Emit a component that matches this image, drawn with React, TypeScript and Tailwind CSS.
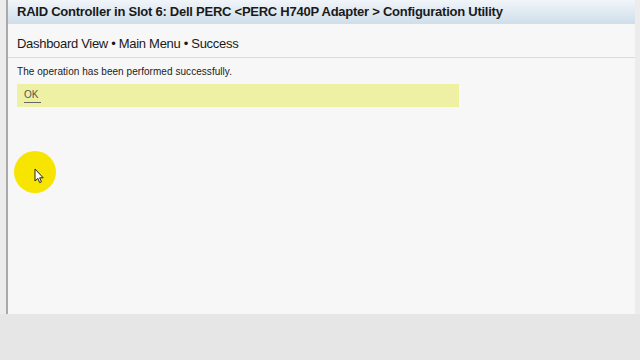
import React from "react";

export default function App() {
  return (
    <div className="w-[640px] h-[360px] bg-[#e6e6e6] relative overflow-hidden" style={{ fontFamily: '"Liberation Sans", Arial, sans-serif' }}>
      <div className="flex h-[314px]">
        <div className="w-[6px] bg-[#ececec]" />
        <div className="w-[2px] bg-[#a9a9a9]" />
        <div className="w-[627px] flex flex-col bg-[#f7f7f7]">
          <div className="h-[24px] bg-gradient-to-b from-[#f1f5f9] to-[#cfdeea] flex items-center pl-[9px]">
            <span className="text-[13px] font-bold text-[#1a1a1a] tracking-[-0.25px]">RAID Controller in Slot 6: Dell PERC &lt;PERC H740P Adapter &gt; Configuration Utility</span>
          </div>
          <div className="h-[34px] flex items-center pl-[9px] border-b border-[#dcdcdc] pt-[6px]">
            <span className="text-[13px] text-[#1a1a1a] tracking-[-0.3px]">Dashboard View • Main Menu • Success</span>
          </div>
          <div className="pl-[9px] pt-[7px]">
            <div className="text-[10px] text-[#222] leading-[13px] tracking-[0.05px]">The operation has been performed successfully.</div>
            <div className="mt-[6px] w-[442px] h-[23px] bg-[#eef0a4] flex items-center pl-[7px]">
              <span className="text-[10px] text-[#555] border-b border-[#666] leading-[12px] pb-[1px] pr-[3px]">OK</span>
            </div>
          </div>
        </div>
        <div className="w-[5px] bg-[#ececec]" />
      </div>
      <div className="absolute left-[14px] top-[151px] w-[42px] h-[42px] rounded-full bg-[#f7e400]" />
      <svg className="absolute left-[34px] top-[168px]" width="11" height="16" viewBox="0 0 11 16">
        <path d="M1 1 L1 13 L3.8 10.4 L5.7 14.6 L7.5 13.8 L5.6 9.8 L9.2 9.8 Z" fill="#fff" stroke="#222" strokeWidth="1" strokeLinejoin="round" />
      </svg>
    </div>
  );
}
